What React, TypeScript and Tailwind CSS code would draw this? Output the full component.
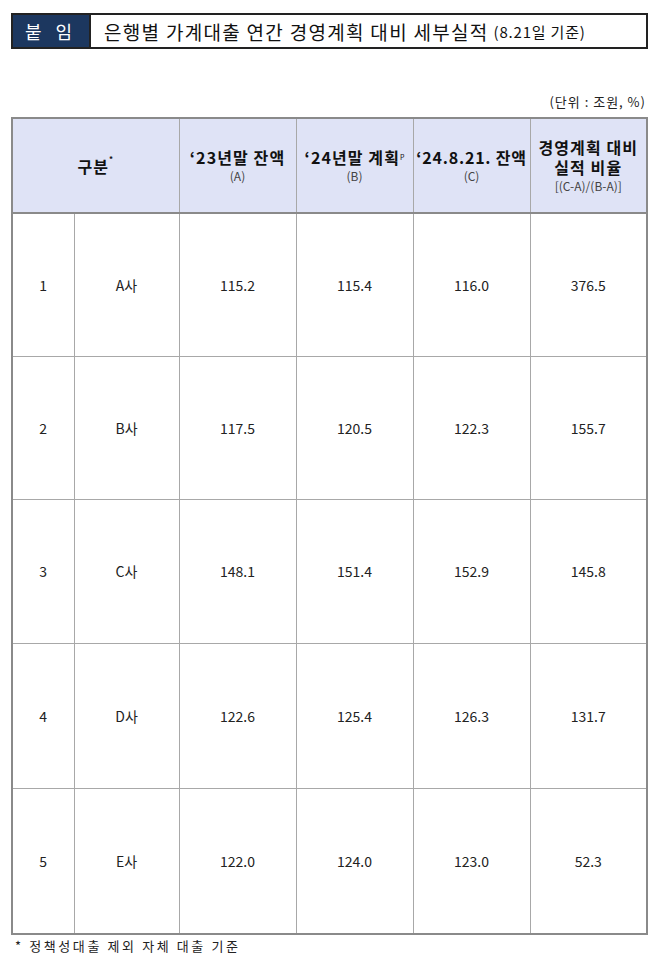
import React from "react";

const rows = [
  ["1", "A사", "115.2", "115.4", "116.0", "376.5"],
  ["2", "B사", "117.5", "120.5", "122.3", "155.7"],
  ["3", "C사", "148.1", "151.4", "152.9", "145.8"],
  ["4", "D사", "122.6", "125.4", "126.3", "131.7"],
  ["5", "E사", "122.0", "124.0", "123.0", "52.3"],
];

const rowH = ["h-[143px]", "h-[143px]", "h-[144px]", "h-[145px]", "h-[146px]"];

export default function App() {
  return (
    <div
      className="w-[658px] h-[961px] bg-white text-[#111] overflow-hidden"
      style={{ fontFamily: '"Noto Sans CJK KR", "Noto Sans", sans-serif' }}
    >
      <div className="pt-[13px] pl-[11px]">
        <div className="flex w-[637px] h-[36px] border-2 border-[#222]">
          <div className="w-[76px] bg-[#1c375f] text-white flex items-center justify-center text-[18px] tracking-[5px] leading-none">
            붙 임
          </div>
          <div className="flex-1 border-l-2 border-[#222] flex items-center pl-[13px] leading-none">
            <span className="text-[19px] tracking-[1.3px]">은행별 가계대출 연간 경영계획 대비 세부실적</span>
            <span className="text-[15px] ml-[5px] tracking-[0.8px]">(8.21일 기준)</span>
          </div>
        </div>
      </div>

      <div className="w-[646px] flex justify-end mt-[46px] text-[13px] leading-none text-[#222] tracking-[1px]">
        (단위 : 조원, %)
      </div>

      <div className="pl-[11px] mt-[9px]">
        <table className="table-fixed border-collapse w-[635px] border-2 border-[#8a8a8a]">
          <colgroup>
            <col className="w-[62px]" />
            <col className="w-[105px]" />
            <col className="w-[117px]" />
            <col className="w-[117px]" />
            <col className="w-[117px]" />
            <col className="w-[117px]" />
          </colgroup>
          <thead>
            <tr className="h-[95px] bg-[#dfe3f6]">
              <th colSpan={2} className="border border-[#a8a8a8] border-b-2 border-b-[#8a8a8a] font-bold text-[16px] leading-[18px] tracking-[1px]">
                구분<sup className="text-[8px] align-super">*</sup>
              </th>
              <th className="border border-[#a8a8a8] border-b-2 border-b-[#8a8a8a] font-bold">
                <div className="text-[16px] leading-[20px] tracking-[1.1px]">‘23년말 잔액</div>
                <div className="text-[12px] font-normal leading-[18px] text-[#444]">(A)</div>
              </th>
              <th className="border border-[#a8a8a8] border-b-2 border-b-[#8a8a8a] font-bold">
                <div className="text-[16px] leading-[20px] tracking-[1.1px]">
                  ‘24년말 계획<sup className="text-[7px] font-normal tracking-normal">P</sup>
                </div>
                <div className="text-[12px] font-normal leading-[18px] text-[#444]">(B)</div>
              </th>
              <th className="border border-[#a8a8a8] border-b-2 border-b-[#8a8a8a] font-bold">
                <div className="text-[16px] leading-[20px] tracking-[0.8px]">‘24.8.21. 잔액</div>
                <div className="text-[12px] font-normal leading-[18px] text-[#444]">(C)</div>
              </th>
              <th className="border border-[#a8a8a8] border-b-2 border-b-[#8a8a8a] font-bold">
                <div className="text-[16px] leading-[20px] tracking-[1.1px]">경영계획 대비</div>
                <div className="text-[16px] leading-[20px] tracking-[1.1px]">실적 비율</div>
                <div className="text-[12px] font-normal leading-[17px] text-[#444]">[(C-A)/(B-A)]</div>
              </th>
            </tr>
          </thead>
          <tbody>
            {rows.map((r, ri) => (
              <tr key={r[0]} className={rowH[ri]}>
                {r.map((c, i) => (
                  <td
                    key={i}
                    className="border border-[#a8a8a8] text-center text-[14px] leading-none text-[#222]"
                  >
                    {c}
                  </td>
                ))}
              </tr>
            ))}
          </tbody>
        </table>
      </div>

      <div className="pl-[15px] mt-[2px] text-[13px] leading-[18px] tracking-[2.6px] text-[#222]">
        * 정책성대출 제외 자체 대출 기준
      </div>
    </div>
  );
}
